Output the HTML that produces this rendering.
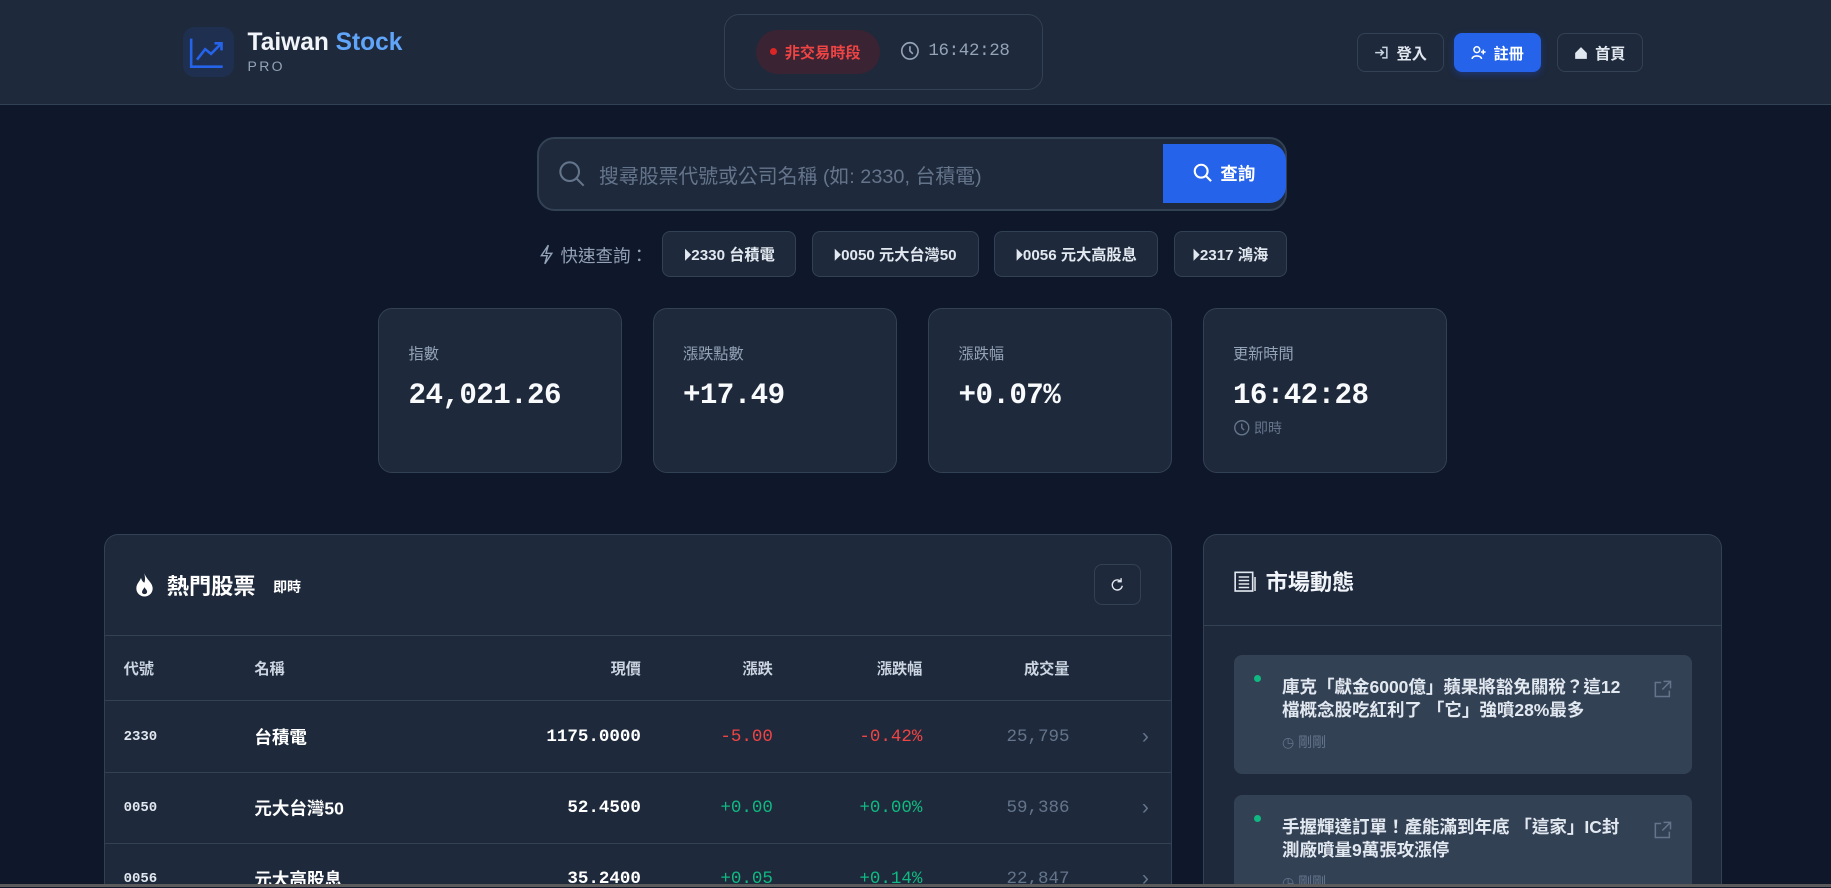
<!DOCTYPE html>
<html><head><meta charset="utf-8"><style>
html{zoom:1.16773;overflow:hidden;background:#0f172a}
*{box-sizing:border-box;margin:0;padding:0}
body{width:1568px;height:760px;overflow:hidden;background:#0f172a;font-family:"Liberation Sans","Noto Sans CJK TC",sans-serif;color:#e2e8f0}
#wrap{position:relative;width:1568px;height:760px;overflow:hidden}
.abs{position:absolute}
.mono{font-family:"Liberation Mono","DejaVu Sans Mono",monospace}
header{position:absolute;left:0;top:0;width:1568px;height:90px;background:#1e293b;border-bottom:1px solid #334155}
.btn{position:absolute;top:28px;height:34px;border:1px solid #334155;border-radius:7px;font-size:13px;font-weight:bold;color:#e2e8f0;display:flex;align-items:center;justify-content:center;gap:6px}
.chip{position:absolute;top:198px;height:39px;border:1px solid #334155;border-radius:7px;background:#1e293b;font-size:13px;font-weight:bold;color:#e2e8f0;display:flex;align-items:center;justify-content:center}
.card{position:absolute;top:264px;width:209px;height:141px;background:#1e293b;border:1px solid #334155;border-radius:12px;padding:28px 25px}
.card .l{font-size:13px;color:#94a3b8}
.card .v{font-size:25px;font-weight:bold;color:#f8fafc;margin-top:13px;font-family:"Liberation Mono",monospace;letter-spacing:-0.5px}
.panel{position:absolute;top:457px;background:#1e293b;border:1px solid #334155;border-bottom:none;border-radius:12px 12px 0 0;height:303px;overflow:hidden}
.row{position:absolute;left:0;width:914px;height:61px;border-top:1px solid #334155;font-size:14px}
.row span{position:absolute;top:50%;transform:translateY(-50%)}
.news{position:absolute;left:26px;width:392px;height:102px;background:#334155;border-radius:7px}
</style></head><body><div id="wrap">
<header>
 <div class="abs" style="left:157px;top:23px;width:43px;height:43px;border-radius:10px;background:#1f2f4f">
  <svg width="43" height="43" viewBox="0 0 43 43"><path d="M7 10V34H34" stroke="#2563eb" stroke-width="2.2" fill="none"/><path d="M12 28L19 19L24 23L33 14M27 14H33V20" stroke="#2563eb" stroke-width="2.2" fill="none"/></svg>
 </div>
 <div class="abs" style="left:212px;top:25px;font-size:21px;font-weight:bold;color:#f1f5f9">Taiwan <span style="color:#60a5fa">Stock</span></div>
 <div class="abs" style="left:212px;top:50px;font-size:12px;color:#94a3b8;letter-spacing:2px">PRO</div>
 <div class="abs" style="left:620px;top:12px;width:273px;height:65px;border:1px solid #334155;border-radius:13px"></div>
 <div class="abs" style="left:647px;top:26px;width:107px;height:37px;border-radius:19px;background:#3a2333;color:#ef4444;font-size:13px;font-weight:bold;display:flex;align-items:center;padding-left:12px;gap:7px"><span style="width:6px;height:6px;border-radius:3px;background:#dc2626;display:inline-block"></span>非交易時段</div>
 <svg class="abs" style="left:771px;top:35px" width="17" height="17" viewBox="0 0 17 17"><circle cx="8.5" cy="8.5" r="7" stroke="#94a3b8" stroke-width="1.4" fill="none"/><path d="M8.5 4.5V8.5L11 11" stroke="#94a3b8" stroke-width="1.4" fill="none"/></svg>
 <div class="abs mono" style="left:795px;top:35px;font-size:15px;color:#94a3b8;letter-spacing:-0.3px">16:42:28</div>
 <div class="btn" style="left:1162px;width:75px">
  <svg width="13" height="13" viewBox="0 0 13 13"><path d="M7 2H11V11H7M1 6.5H8M5.5 4L8 6.5L5.5 9" stroke="#cbd5e1" stroke-width="1.3" fill="none"/></svg>登入</div>
 <div class="btn" style="left:1245px;width:75px;background:#2563eb;border-color:#2563eb;color:#fff;box-shadow:0 2px 6px #1d4ed866">
  <svg width="13" height="13" viewBox="0 0 13 13"><circle cx="5" cy="4" r="2.5" stroke="#fff" stroke-width="1.3" fill="none"/><path d="M1 12C1 8.5 9 8.5 9 12M10.5 4V8M8.5 6H12.5" stroke="#fff" stroke-width="1.3" fill="none"/></svg>註冊</div>
 <div class="btn" style="left:1333px;width:74px">
  <svg width="12" height="12" viewBox="0 0 12 12"><path d="M6 1L11 6V11H1V6Z" fill="#e2e8f0"/></svg>首頁</div>
</header>

<div class="abs" style="left:460px;top:117px;width:642px;height:64px;border:2px solid #334155;border-radius:15px;background:#1e293b"></div>
<svg class="abs" style="left:478px;top:137px" width="24" height="24" viewBox="0 0 24 24"><circle cx="10" cy="10" r="8" stroke="#64748b" stroke-width="1.8" fill="none"/><path d="M16 16L22 22" stroke="#64748b" stroke-width="1.8"/></svg>
<div class="abs" style="left:513px;top:137px;font-size:17px;color:#64748b">搜尋股票代號或公司名稱 (如: 2330, 台積電)</div>
<div class="abs" style="left:996px;top:123px;width:105px;height:51px;background:#2563eb;border-radius:0 14px 14px 0;color:#fff;font-size:15px;font-weight:bold;display:flex;align-items:center;justify-content:center;gap:6px">
 <svg width="17" height="17" viewBox="0 0 17 17"><circle cx="7" cy="7" r="5.5" stroke="#fff" stroke-width="1.8" fill="none"/><path d="M11 11L15.5 15.5" stroke="#fff" stroke-width="1.8"/></svg>查詢</div>

<svg class="abs" style="left:462px;top:209px" width="13" height="18" viewBox="0 0 13 18"><path d="M8 1L2 10H7L5 17L11 8H6Z" stroke="#94a3b8" stroke-width="1.2" fill="none"/></svg>
<div class="abs" style="left:480px;top:208px;font-size:15px;color:#94a3b8">快速查詢：</div>
<div class="chip" style="left:567px;width:115px">⏵2330 台積電</div>
<div class="chip" style="left:695px;width:143px">⏵0050 元大台灣50</div>
<div class="chip" style="left:851px;width:141px">⏵0056 元大高股息</div>
<div class="chip" style="left:1005px;width:97px">⏵2317 鴻海</div>

<div class="card" style="left:324px"><div class="l">指數</div><div class="v">24,021.26</div></div>
<div class="card" style="left:559px"><div class="l">漲跌點數</div><div class="v">+17.49</div></div>
<div class="card" style="left:795px"><div class="l">漲跌幅</div><div class="v">+0.07%</div></div>
<div class="card" style="left:1030px"><div class="l">更新時間</div><div class="v">16:42:28</div>
 <div style="margin-top:5px;font-size:12px;color:#64748b;display:flex;align-items:center;gap:3px"><svg width="15" height="15" viewBox="0 0 15 15"><circle cx="7.5" cy="7.5" r="6" stroke="#64748b" stroke-width="1.2" fill="none"/><path d="M7.5 4V7.5L9.5 9.5" stroke="#64748b" stroke-width="1.2" fill="none"/></svg>即時</div></div>

<div class="panel" style="left:89px;width:915px">
 <svg class="abs" style="left:25px;top:32px" width="18" height="22" viewBox="0 0 18 22"><path d="M9 1C10 6 16 9 16 14A7 7 0 0 1 2 14C2 10 5 8 6 5C7 8 8 9 9 9C10 6 9 3 9 1Z" fill="#fff"/><path d="M9 13C10 15 12 16 11 18A2.5 2.5 0 0 1 7 18C6.5 16 8 15 9 13Z" fill="#1e293b"/></svg>
 <div class="abs" style="left:53px;top:29px;font-size:19px;font-weight:bold;color:#fff">熱門股票</div>
 <div class="abs" style="left:144px;top:36px;font-size:12px;font-weight:bold;color:#fff">即時</div>
 <div class="abs" style="left:847px;top:25px;width:40px;height:35px;border:1px solid #334155;border-radius:7px;display:flex;align-items:center;justify-content:center"><svg width="12" height="13" viewBox="0 0 12 13"><path d="M9.5 4A4.3 4.3 0 1 0 10.5 7.5M9.5 1V4H6.5" stroke="#e2e8f0" stroke-width="1.2" fill="none"/></svg></div>
 <div class="row" style="top:86px;height:56px;font-size:13px;font-weight:bold;color:#cbd5e1">
  <span style="left:16px">代號</span><span style="left:128px">名稱</span><span style="right:455px">現價</span><span style="right:342px">漲跌</span><span style="right:214px">漲跌幅</span><span style="right:88px">成交量</span></div>
 <div class="row" style="top:142px"><span class="mono" style="left:16px;font-size:12px;font-weight:bold">2330</span><span style="left:128px;font-size:15px;font-weight:bold;color:#fff">台積電</span><span class="mono" style="right:455px;font-weight:bold;color:#fff;font-size:15px">1175.0000</span><span class="mono" style="right:342px;color:#ef4444;font-size:15px">-5.00</span><span class="mono" style="right:214px;color:#ef4444;font-size:15px">-0.42%</span><span class="mono" style="right:88px;color:#64748b;font-size:15px">25,795</span><span style="right:20px;color:#64748b;font-size:18px">›</span></div>
 <div class="row" style="top:203px"><span class="mono" style="left:16px;font-size:12px;font-weight:bold">0050</span><span style="left:128px;font-size:15px;font-weight:bold;color:#fff">元大台灣50</span><span class="mono" style="right:455px;font-weight:bold;color:#fff;font-size:15px">52.4500</span><span class="mono" style="right:342px;color:#10b981;font-size:15px">+0.00</span><span class="mono" style="right:214px;color:#10b981;font-size:15px">+0.00%</span><span class="mono" style="right:88px;color:#64748b;font-size:15px">59,386</span><span style="right:20px;color:#64748b;font-size:18px">›</span></div>
 <div class="row" style="top:264px"><span class="mono" style="left:16px;font-size:12px;font-weight:bold">0056</span><span style="left:128px;font-size:15px;font-weight:bold;color:#fff">元大高股息</span><span class="mono" style="right:455px;font-weight:bold;color:#fff;font-size:15px">35.2400</span><span class="mono" style="right:342px;color:#10b981;font-size:15px">+0.05</span><span class="mono" style="right:214px;color:#10b981;font-size:15px">+0.14%</span><span class="mono" style="right:88px;color:#64748b;font-size:15px">22,847</span><span style="right:20px;color:#64748b;font-size:18px">›</span></div>
</div>

<div class="panel" style="left:1030px;width:445px">
 <svg class="abs" style="left:26px;top:30px" width="20" height="20" viewBox="0 0 20 20"><rect x="1" y="2" width="15" height="16" stroke="#e2e8f0" stroke-width="1.4" fill="none"/><path d="M4 6H13M4 9H13M4 12H13M4 15H13M18 6V18" stroke="#e2e8f0" stroke-width="1.3"/></svg>
 <div class="abs" style="left:53px;top:26px;font-size:19px;font-weight:bold;color:#f1f5f9">市場動態</div>
 <div class="abs" style="left:0;top:77px;width:445px;border-top:1px solid #334155"></div>
 <div class="news" style="top:103px">
  <div class="abs" style="left:17px;top:17px;width:6px;height:6px;border-radius:3px;background:#10b981"></div>
  <div class="abs" style="left:41px;top:18px;width:300px;font-size:15px;font-weight:bold;line-height:20px;color:#e2e8f0">庫克「獻金6000億」蘋果將豁免關稅？這12檔概念股吃紅利了 「它」強噴28%最多</div>
  <div class="abs" style="left:41px;top:66px;font-size:12px;color:#64748b">◷ 剛剛</div>
  <svg class="abs" style="left:359px;top:21px" width="17" height="17" viewBox="0 0 17 17"><path d="M7 3H2V15H14V10M9 2H15V8M15 2L8 9" stroke="#64748b" stroke-width="1.3" fill="none"/></svg>
 </div>
 <div class="news" style="top:223px;height:80px;border-radius:7px 7px 0 0">
  <div class="abs" style="left:17px;top:17px;width:6px;height:6px;border-radius:3px;background:#10b981"></div>
  <div class="abs" style="left:41px;top:18px;width:300px;font-size:15px;font-weight:bold;line-height:20px;color:#e2e8f0">手握輝達訂單！產能滿到年底 「這家」IC封測廠噴量9萬張攻漲停</div>
  <div class="abs" style="left:41px;top:66px;font-size:12px;color:#64748b">◷ 剛剛</div>
  <svg class="abs" style="left:359px;top:21px" width="17" height="17" viewBox="0 0 17 17"><path d="M7 3H2V15H14V10M9 2H15V8M15 2L8 9" stroke="#64748b" stroke-width="1.3" fill="none"/></svg>
 </div>
</div>
<div class="abs" style="left:0;top:757px;width:1568px;height:3px;background:#5b5b5b"></div>
</div></body></html>
